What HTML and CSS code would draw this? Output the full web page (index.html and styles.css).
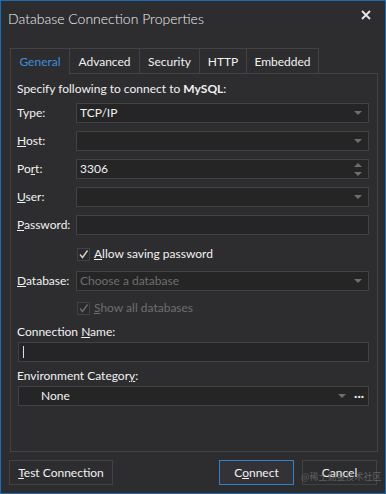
FILE: index.html
```html
<!DOCTYPE html>
<html lang="en">
<head>
  <meta charset="UTF-8" />
  <title>Database Connection Properties</title>
  <link rel="stylesheet" href="styles.css">
</head>
<body>
  <div class="window">
    <header class="titlebar">
      <span class="title">Database Connection Properties</span>
      <button class="close" aria-label="Close">
        <svg width="10" height="10" viewBox="0 0 10 10"><path d="M1 1L9 9M9 1L1 9" stroke="#e8e8e8" stroke-width="1.8"/></svg>
      </button>
    </header>

    <nav class="tabs">
      <span class="tab active" style="width:59px">General</span>
      <span class="tab" style="width:70px">Advanced</span>
      <span class="tab" style="width:60px">Security</span>
      <span class="tab" style="width:47px">HTTP</span>
      <span class="tab last" style="width:73px">Embedded</span>
    </nav>

    <section class="panel">
      <p class="intro">Specify following to connect to <b>MySQL</b>:</p>

      <div class="row">
        <label>Type:</label>
        <div class="field combo">TCP/IP<span class="arrow"></span></div>
      </div>
      <div class="row">
        <label><u>H</u>ost:</label>
        <div class="field combo"><span class="arrow"></span></div>
      </div>
      <div class="row">
        <label>Po<u>r</u>t:</label>
        <div class="field combo">3306
          <span class="spin"><span class="up"></span><span class="down"></span></span>
        </div>
      </div>
      <div class="row">
        <label><u>U</u>ser:</label>
        <div class="field combo"><span class="arrow"></span></div>
      </div>
      <div class="row">
        <label><u>P</u>assword:</label>
        <div class="field"></div>
      </div>

      <div class="row check-row first-check">
        <span></span>
        <div class="check">
          <span class="box"><svg width="11" height="11" viewBox="0 0 11 11"><path d="M2 5.5L4.5 8.5L9.5 1.5" fill="none" stroke="#d0d0d0" stroke-width="1.4"/></svg></span>
          <span><u>A</u>llow saving password</span>
        </div>
      </div>

      <div class="row db-row">
        <label><u>D</u>atabase:</label>
        <div class="field combo disabled">Choose a database<span class="arrow"></span></div>
      </div>

      <div class="row check-row">
        <span></span>
        <div class="check disabled">
          <span class="box"><svg width="11" height="11" viewBox="0 0 11 11"><path d="M2 5.5L4.5 8.5L9.5 1.5" fill="none" stroke="#6a6a6a" stroke-width="1.4"/></svg></span>
          <span><u>S</u>how all databases</span>
        </div>
      </div>

      <p class="caption">Connection <u>N</u>ame:</p>
      <div class="field wide"><span class="caret"></span></div>

      <p class="caption">Environment Categor<u>y</u>:</p>
      <div class="field wide env">
        <span class="env-name">None</span>
        <span class="arrow"></span>
        <span class="dots">···</span>
      </div>
    </section>

    <footer class="buttons">
      <button class="btn test"><u>T</u>est Connection</button>
      <span class="spacer"></span>
      <button class="btn primary">C<u>o</u>nnect</button>
      <button class="btn">Cancel</button>
    </footer>

    <span class="watermark">@稀土掘金技术社区</span>
  </div>
</body>
</html>
```

FILE: styles.css
```css
:root {
  --bg: #2d2d30;
  --field-bg: #252526;
  --line: #424246;
  --text: #f1f1f1;
  --muted: #6e6e6e;
  --accent: #3c8fdc;
}

body {
  margin: 0;
  background: var(--bg);
  font-family: "Segoe UI", Lato, sans-serif;
  font-size: 12px;
  color: var(--text);
}

.window {
  width: 386px;
  height: 494px;
  box-sizing: border-box;
  border: 1px solid #1c6db5;
  background: var(--bg);
  display: flex;
  flex-direction: column;
  position: relative;
  overflow: hidden;
}

.titlebar {
  height: 47px;
  box-sizing: border-box;
  padding: 8px 14px 0 7px;
  display: flex;
  align-items: flex-start;
  justify-content: space-between;
}

.title {
  font-size: 14px;
  line-height: 20px;
  font-weight: 300;
  color: #f0f0f0;
}

.close {
  background: none;
  border: none;
  padding: 0;
  margin-top: 1px;
  width: 10px;
  height: 10px;
  display: flex;
}

.tabs {
  display: flex;
  margin-left: 9px;
  height: 25px;
}

.tab {
  box-sizing: border-box;
  height: 25px;
  border-top: 1px solid var(--line);
  border-left: 1px solid var(--line);
  display: flex;
  align-items: center;
  justify-content: center;
  line-height: 16px;
  padding-top: 1px;
}

.tab.last {
  border-right: 1px solid var(--line);
}

.tab.active {
  color: var(--accent);
  height: 26px;
  margin-bottom: -1px;
  background: var(--bg);
  position: relative;
  z-index: 1;
}

.panel {
  margin-left: 9px;
  width: 368px;
  height: 379px;
  box-sizing: border-box;
  border: 1px solid var(--line);
  padding: 7px 8px 0 6px;
  display: flex;
  flex-direction: column;
}

.intro {
  margin: 0 0 6px;
  line-height: 16px;
}

.row {
  display: grid;
  grid-template-columns: 59px 1fr;
  align-items: center;
  height: 20px;
  margin-bottom: 8px;
}

.row label {
  line-height: 16px;
  white-space: nowrap;
}

.field {
  box-sizing: border-box;
  height: 20px;
  border: 1px solid var(--line);
  background: var(--field-bg);
  display: flex;
  align-items: center;
  padding-left: 3px;
  line-height: 16px;
  position: relative;
}

.field.disabled {
  color: var(--muted);
}

.arrow {
  margin-left: auto;
  margin-right: 6px;
  width: 0;
  height: 0;
  border-left: 4px solid transparent;
  border-right: 4px solid transparent;
  border-top: 4px solid #6f6f6f;
}

.spin {
  margin-left: auto;
  margin-right: 6px;
  display: flex;
  flex-direction: column;
  gap: 5px;
}

.spin .up {
  border-left: 4px solid transparent;
  border-right: 4px solid transparent;
  border-bottom: 4px solid #6f6f6f;
}

.spin .down {
  border-left: 4px solid transparent;
  border-right: 4px solid transparent;
  border-top: 4px solid #6f6f6f;
}

.check-row {
  margin-bottom: 0;
}

.first-check {
  margin-top: 1px;
}

.db-row {
  margin-top: 7px;
  margin-bottom: 7px;
}

.check {
  display: flex;
  align-items: center;
  gap: 4px;
  margin-left: 1px;
  line-height: 16px;
}

.check.disabled {
  color: var(--muted);
}

.box {
  width: 13px;
  height: 13px;
  box-sizing: border-box;
  border: 1px solid var(--line);
  background: #2a2a2c;
  display: flex;
  align-items: center;
  justify-content: center;
}

.caption {
  margin: 6px 0 2px;
  line-height: 16px;
}

.caption + .field {
  margin-bottom: 0;
}

.wide {
  width: 351px;
  margin-left: 1px;
}

.caret {
  width: 1px;
  height: 12px;
  background: #e0e0e0;
  margin-left: 1px;
}

.env-name {
  margin-left: 19px;
}

.env .arrow {
  margin-right: 8px;
}

.dots {
  margin-right: 4px;
  font-weight: 700;
  color: #f0f0f0;
}

.buttons {
  display: flex;
  gap: 8px;
  padding: 0 8px 0 8px;
  margin-top: 8px;
}

.spacer {
  flex: 1;
}

.btn {
  font: inherit;
  color: var(--text);
  background: var(--bg);
  border: 1px solid var(--line);
  height: 25px;
  width: 75px;
  padding: 0;
}

.btn.test {
  width: 104px;
}

.btn.primary {
  border-color: #2f82c8;
  background: #333337;
}

.watermark {
  position: absolute;
  left: 300px;
  top: 469px;
  white-space: nowrap;
  font-family: "Noto Sans CJK SC", sans-serif;
  font-size: 9px;
  color: rgba(150, 150, 150, 0.5);
  pointer-events: none;
}
```
